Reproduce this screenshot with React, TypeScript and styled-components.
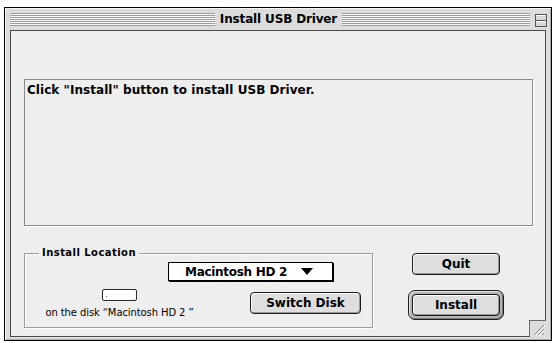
import React from "react";
import styled, { createGlobalStyle } from "styled-components";

const Global = createGlobalStyle`
  html, body { margin: 0; padding: 0; background: #ffffff; }
  body { font-family: "DejaVu Sans", "Liberation Sans", sans-serif; color: #000; }
  #root { display: block; }
`;

const Window = styled.div`
  box-sizing: border-box;
  width: 548px;
  height: 334px;
  margin: 7px 0 0 4px;
  border: 1px solid #000;
  background: #dcdcdc;
  box-shadow: inset 1px 1px 0 #f6f6f6, inset -1px -1px 0 #a8a8a8;
  display: flex;
  flex-direction: column;
`;

const TitleBar = styled.div`
  height: 22px;
  display: flex;
  align-items: center;
  padding: 0 4px 0 5px;
`;

const TitleSide = styled.div`
  flex: 1;
  display: flex;
  align-items: center;
`;

const Stripes = styled.div`
  flex: 1;
  height: 13px;
  margin-top: 1px;
  background: repeating-linear-gradient(
    to bottom,
    #9c9c9c 0px,
    #9c9c9c 1px,
    #f8f8f8 1px,
    #f8f8f8 2px
  );
`;

const Title = styled.div`
  font-family: "DejaVu Sans", sans-serif;
  font-weight: bold;
  font-size: 12px;
  letter-spacing: -0.15px;
  line-height: 22px;
  padding: 0 5px;
  white-space: nowrap;
`;

const CollapseBox = styled.svg`
  display: block;
  margin-left: 5px;
  margin-top: 2px;
`;

const Content = styled.div`
  box-sizing: border-box;
  position: relative;
  height: 307px;
  margin: 0 5px;
  border: 1px solid #4a4a4a;
  background: #eeeeee;
  padding: 48px 0 0 13px;
  display: flex;
  flex-direction: column;
`;

const MessageBox = styled.div`
  box-sizing: border-box;
  width: 509px;
  height: 147px;
  border: 1px solid #8a8a8a;
  box-shadow: 1px 1px 0 #ffffff;
  padding: 2px 2px;
  font-weight: bold;
  font-size: 12px;
  letter-spacing: 0.05px;
  line-height: 17px;
`;

const BottomRow = styled.div`
  display: flex;
  margin-top: 27px;
`;

const GroupBox = styled.div`
  box-sizing: border-box;
  position: relative;
  width: 349px;
  height: 75px;
  border: 1px solid #9a9a9a;
  box-shadow: 1px 1px 0 #ffffff, inset 1px 1px 0 #ffffff;
  display: flex;
  flex-direction: column;
`;

const Legend = styled.div`
  position: absolute;
  top: -7px;
  left: 14px;
  padding: 0 3px;
  background: #eeeeee;
  font-weight: bold;
  font-size: 10px;
  line-height: 12px;
  letter-spacing: 0.45px;
`;

const PopupRow = styled.div`
  padding-left: 143px;
  margin-top: 8px;
`;

const Popup = styled.div`
  box-sizing: border-box;
  width: 165px;
  height: 19px;
  border: 1px solid #000;
  background: #ffffff;
  box-shadow: 1px 1px 0 #000;
  display: flex;
  align-items: center;
  padding-left: 16px;
  font-weight: bold;
  font-size: 12px;
  letter-spacing: -0.3px;
`;

const Arrow = styled.svg`
  display: block;
  margin-left: auto;
  margin-right: 19px;
`;

const LowerRow = styled.div`
  display: flex;
  align-items: flex-start;
`;

const DiskInfo = styled.div`
  width: 151px;
  margin-left: 19px;
  margin-top: 8px;
  display: flex;
  flex-direction: column;
  align-items: center;
`;

const DiskBox = styled.div`
  box-sizing: border-box;
  position: relative;
  width: 35px;
  height: 12px;
  border: 1px solid #2a2a2a;
  border-radius: 2px;
  background: #ffffff;
  &::after {
    content: "";
    position: absolute;
    left: 3px;
    top: 6px;
    width: 1px;
    height: 1px;
    background: #777;
  }
`;

const Caption = styled.div`
  margin-top: 6px;
  font-size: 10px;
  line-height: 12px;
  letter-spacing: -0.1px;
  white-space: nowrap;
`;

const Button = styled.div<{ $w: number }>`
  box-sizing: border-box;
  width: ${(p) => p.$w}px;
  height: 22px;
  border: 1px solid #1a1a1a;
  border-radius: 4px;
  background: #dedede;
  box-shadow: inset 1px 1px 0 #ffffff, inset -1px -1px 0 #9a9a9a;
  display: flex;
  align-items: center;
  justify-content: center;
  font-weight: bold;
  font-size: 12px;
  letter-spacing: 0px;
  white-space: nowrap;
`;

const SwitchWrap = styled.div`
  margin-left: 55px;
  margin-top: 11px;
`;

const ButtonColumn = styled.div`
  width: 96px;
  margin-left: 35px;
  display: flex;
  flex-direction: column;
  align-items: center;
`;

const DefaultRing = styled.div`
  box-sizing: border-box;
  margin-top: 15px;
  padding: 3px;
  border: 1px solid #1a1a1a;
  border-radius: 7px;
  background: #b4b4b4;
  box-shadow: inset 1px 1px 0 #e8e8e8, inset -1px -1px 0 #7a7a7a;
`;

const Grip = styled.div`
  position: absolute;
  right: -1px;
  bottom: -1px;
  width: 17px;
  height: 17px;
  box-sizing: border-box;
  border-top: 1px solid #6a6a6a;
  border-left: 1px solid #6a6a6a;
  background: #dcdcdc;
`;

const GripSvg = styled.svg`
  display: block;
`;

export default function App() {
  return (
    <>
      <Global />
      <Window>
        <TitleBar>
          <TitleSide>
            <Stripes />
          </TitleSide>
          <Title>Install USB Driver</Title>
          <TitleSide>
            <Stripes />
            <CollapseBox width="12" height="13" viewBox="0 0 12 13">
              <rect x="0.5" y="0.5" width="11" height="12" fill="#d8d8d8" stroke="#555" />
              <line x1="1" y1="6.5" x2="11" y2="6.5" stroke="#555" />
              <line x1="1.5" y1="1.5" x2="10.5" y2="1.5" stroke="#fff" />
              <line x1="1.5" y1="7.5" x2="10.5" y2="7.5" stroke="#fff" />
            </CollapseBox>
          </TitleSide>
        </TitleBar>
        <Content>
          <MessageBox>Click "Install" button to install USB Driver.</MessageBox>
          <BottomRow>
            <GroupBox>
              <Legend>Install Location</Legend>
              <PopupRow>
                <Popup>
                  Macintosh HD 2
                  <Arrow width="12" height="7" viewBox="0 0 12 7">
                    <polygon points="0,0 12,0 6,7" fill="#000" />
                  </Arrow>
                </Popup>
              </PopupRow>
              <LowerRow>
                <DiskInfo>
                  <DiskBox />
                  <Caption>on the disk “Macintosh HD 2 ”</Caption>
                </DiskInfo>
                <SwitchWrap>
                  <Button $w={111}>Switch Disk</Button>
                </SwitchWrap>
              </LowerRow>
            </GroupBox>
            <ButtonColumn>
              <Button $w={88}>Quit</Button>
              <DefaultRing>
                <Button $w={88}>Install</Button>
              </DefaultRing>
            </ButtonColumn>
          </BottomRow>
          <Grip>
            <GripSvg width="16" height="16" viewBox="0 0 16 16">
              <line x1="4" y1="14" x2="14" y2="4" stroke="#888" />
              <line x1="5" y1="15" x2="15" y2="5" stroke="#fff" />
              <line x1="8" y1="14" x2="14" y2="8" stroke="#888" />
              <line x1="9" y1="15" x2="15" y2="9" stroke="#fff" />
              <line x1="12" y1="14" x2="14" y2="12" stroke="#888" />
            </GripSvg>
          </Grip>
        </Content>
      </Window>
    </>
  );
}
